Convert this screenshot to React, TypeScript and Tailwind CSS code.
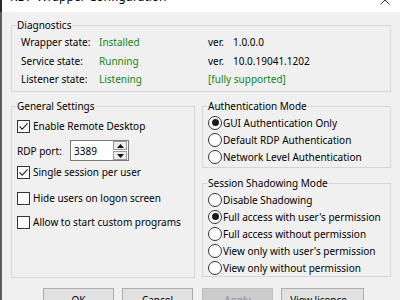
import React from "react";

function Check({ checked }: { checked?: boolean }) {
  return (
    <span className="w-[13px] h-[13px] border border-[#333333] bg-white flex items-center justify-center shrink-0">
      {checked && (
        <svg width="11" height="11" viewBox="0 0 11 11">
          <path d="M1.5 5.3 L4.2 8.2 L9.6 2.3" stroke="#222222" strokeWidth="1.1" fill="none" />
        </svg>
      )}
    </span>
  );
}

function Radio({ selected }: { selected?: boolean }) {
  return (
    <span className="w-[14px] h-[14px] rounded-full border border-[#333333] bg-white flex items-center justify-center shrink-0">
      {selected && <span className="w-[7px] h-[7px] rounded-full bg-[#1a1a1a]" />}
    </span>
  );
}

function CheckRow({ checked, label, className }: { checked?: boolean; label: string; className?: string }) {
  return (
    <div className={"flex items-center h-[13px] gap-[3px] " + (className ?? "")}>
      <Check checked={checked} />
      <span className="whitespace-nowrap leading-[13px]">{label}</span>
    </div>
  );
}

function RadioRow({ selected, label }: { selected?: boolean; label: string }) {
  return (
    <div className="flex items-center h-[17px] gap-[1px]">
      <Radio selected={selected} />
      <span className="whitespace-nowrap">{label}</span>
    </div>
  );
}

function Btn({ label, disabled, className }: { label: string; disabled?: boolean; className?: string }) {
  return (
    <div
      className={
        "h-[23px] border flex items-center justify-center shrink-0 " +
        (disabled
          ? "bg-[#cccccc] border-[#bfbfbf] text-[#8c8c8c] "
          : "bg-[#e1e1e1] border-[#adadad] text-black ") +
        (className ?? "")
      }
    >
      {label}
    </div>
  );
}

export default function App() {
  return (
    <div className="w-[400px] h-[300px] overflow-hidden flex bg-[#f0f0f0] text-black text-[10px] leading-[16px] font-['Noto_Sans','Open_Sans',sans-serif]">
      <div className="w-[2px] flex flex-col shrink-0">
        <div className="h-[12px] bg-[#1f2b3b]" />
        <div className="flex-1 bg-[#5c5c5c]" />
      </div>
      <div className="flex-1 flex flex-col">
        {/* title bar */}
        <div className="h-[12px] bg-white overflow-hidden flex shrink-0">
          <div className="-mt-[11px] pl-[8px] text-[12px] leading-[16px] whitespace-nowrap">RDP Wrapper Configuration</div>
          <svg className="ml-auto mr-[10px] -mt-[5px]" width="10" height="10" viewBox="0 0 10 10">
            <path d="M0.5 0.5 L9.5 9.5 M9.5 0.5 L0.5 9.5" stroke="#333333" strokeWidth="1" />
          </svg>
        </div>

        {/* Diagnostics */}
        <fieldset className="ml-[9px] mt-[5px] w-[380px] border border-[#d6d6d6] pb-[2px]">
          <legend className="ml-[4px] px-[1px] leading-[16px]">Diagnostics</legend>
          <div className="grid grid-cols-[78px_109px_25px_1fr] pl-[9px] auto-rows-[18.5px] items-center">
            <span>Wrapper state:</span>
            <span className="text-[#138613]">Installed</span>
            <span>ver.</span>
            <span>1.0.0.0</span>
            <span>Service state:</span>
            <span className="text-[#138613]">Running</span>
            <span>ver.</span>
            <span>10.0.19041.1202</span>
            <span>Listener state:</span>
            <span className="text-[#138613]">Listening</span>
            <span className="col-span-2 text-[#138613]">[fully supported]</span>
          </div>
        </fieldset>

        <div className="flex gap-[7px] ml-[9px] mt-[6.5px]">
          {/* General Settings */}
          <fieldset className="w-[184px] h-[180px] border border-[#d6d6d6] pl-[5px]">
            <legend className="-ml-[1px] px-[1px] leading-[16px]">General Settings</legend>
            <CheckRow className="mt-[6px]" checked label="Enable Remote Desktop" />
            <div className="flex items-center h-[21px] mt-[7px]">
              <span className="w-[53px] whitespace-nowrap">RDP port:</span>
              <div className="w-[59px] h-[21px] bg-white border border-[#7a7a7a] flex items-center">
                <span className="pl-[3px] flex-1">3389</span>
                <div className="flex flex-col gap-[1px] mr-[1px]">
                  <span className="w-[14px] h-[9px] border border-[#9a9a9a] bg-[#ececec] flex items-center justify-center">
                    <svg width="7" height="4" viewBox="0 0 7 4">
                      <path d="M3.5 0 L7 4 L0 4 Z" fill="#111111" />
                    </svg>
                  </span>
                  <span className="w-[14px] h-[9px] border border-[#9a9a9a] bg-[#ececec] flex items-center justify-center">
                    <svg width="7" height="4" viewBox="0 0 7 4">
                      <path d="M0 0 L7 0 L3.5 4 Z" fill="#111111" />
                    </svg>
                  </span>
                </div>
              </div>
            </div>
            <CheckRow className="mt-[5px]" checked label="Single session per user" />
            <CheckRow className="mt-[13px]" label="Hide users on logon screen" />
            <CheckRow className="mt-[11px]" label="Allow to start custom programs" />
          </fieldset>

          {/* Right column */}
          <div className="w-[189px] flex flex-col">
            <fieldset className="border border-[#d6d6d6] pl-[5px] pb-[2px]">
              <legend className="-ml-[1px] px-[1px] leading-[16px]">Authentication Mode</legend>
              <RadioRow selected label="GUI Authentication Only" />
              <RadioRow label="Default RDP Authentication" />
              <RadioRow label="Network Level Authentication" />
            </fieldset>
            <fieldset className="mt-[7px] border border-[#d6d6d6] pl-[5px]">
              <legend className="-ml-[1px] px-[1px] leading-[16px]">Session Shadowing Mode</legend>
              <RadioRow label="Disable Shadowing" />
              <RadioRow selected label="Full access with user's permission" />
              <RadioRow label="Full access without permission" />
              <RadioRow label="View only with user's permission" />
              <RadioRow label="View only without permission" />
            </fieldset>
          </div>
        </div>

        {/* Buttons */}
        <div className="flex mt-[10px] ml-[41px]">
          <Btn label="OK" className="w-[71px]" />
          <Btn label="Cancel" className="w-[71px] ml-[8px]" />
          <Btn label="Apply" disabled className="w-[71px] ml-[9px]" />
          <Btn label="View licence..." className="w-[83px] ml-[8px]" />
        </div>
      </div>
    </div>
  );
}
